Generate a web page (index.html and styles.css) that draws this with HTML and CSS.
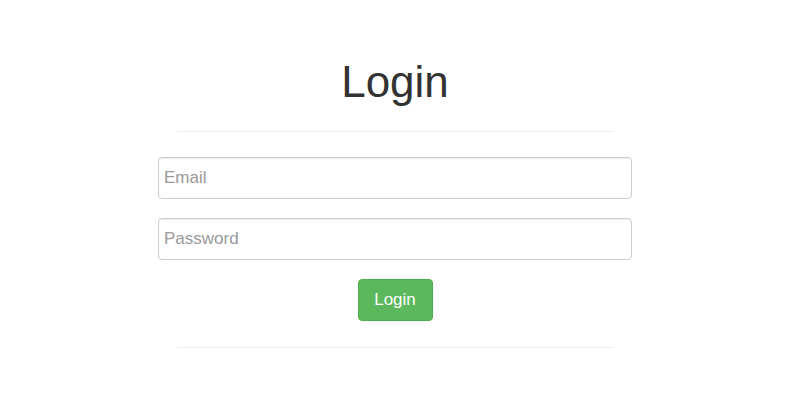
FILE: index.html
```html
<!DOCTYPE html>
<html>
<head>
<meta charset="utf-8">
<link rel="stylesheet" href="styles.css">
</head>
<body>
<main class="wrap">
  <h1 class="title">Login</h1>
  <hr class="rule">
  <form class="form">
    <input class="field" type="email" placeholder="Email">
    <input class="field" type="password" placeholder="Password">
    <button class="btn" type="button">Login</button>
  </form>
  <hr class="rule">
</main>
</body>
</html>
```
FILE: styles.css
```css
html, body {
  margin: 0;
  padding: 0;
  background: #fff;
}
body {
  font-family: "Liberation Sans", Arial, sans-serif;
  color: #333;
}
.wrap {
  width: 474px;
  margin-left: 158px;
  padding-top: 52px;
  display: flex;
  flex-direction: column;
}
.title {
  margin: 0;
  font-size: 44px;
  font-weight: 400;
  line-height: 60px;
  text-align: center;
  color: #333;
}
.rule {
  margin: 19px 19px 0 19px;
  border: 0;
  border-top: 1px solid #eee;
  height: 0;
}
.form {
  display: flex;
  flex-direction: column;
  align-items: center;
  gap: 19px;
  padding-top: 25px;
  padding-bottom: 7px;
}
.field {
  box-sizing: border-box;
  width: 100%;
  height: 42px;
  margin: 0;
  padding: 0 5px;
  border: 1px solid #ccc;
  border-radius: 4px;
  box-shadow: inset 0 1px 1px rgba(0,0,0,.075);
  font-family: "Liberation Sans", Arial, sans-serif;
  font-size: 17px;
  color: #555;
  background: #fff;
}
.field::placeholder {
  color: #999;
}
.btn {
  box-sizing: border-box;
  width: 75px;
  height: 42px;
  margin: 0;
  padding: 0;
  border: 1px solid #4cae4c;
  border-radius: 4px;
  background: #5cb85c;
  color: #fff;
  font-family: "Liberation Sans", Arial, sans-serif;
  font-size: 17px;
}
```
